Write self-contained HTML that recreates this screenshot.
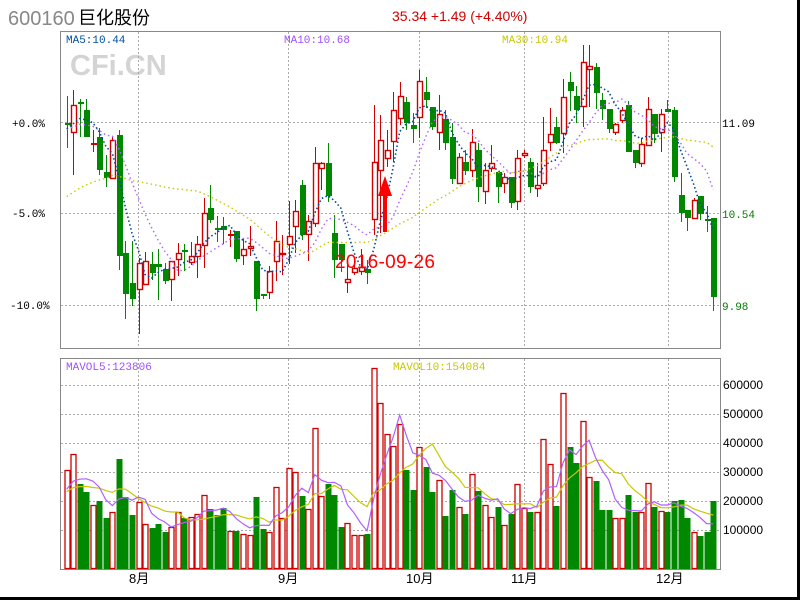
<!DOCTYPE html>
<html><head><meta charset="utf-8"><style>
html,body{margin:0;padding:0;background:#fff;width:800px;height:600px;overflow:hidden}
svg{display:block}
text{font-family:"Liberation Mono","DejaVu Sans Mono",monospace}
</style></head><body>
<svg id="s" width="800" height="600" xmlns="http://www.w3.org/2000/svg">
<rect x="0" y="0" width="800" height="600" fill="#fff"/>
<rect x="0" y="597" width="800" height="3" fill="#000"/>
<rect x="797" y="0" width="3" height="600" fill="#000"/>
<text x="8" y="25" font-family="Liberation Sans,sans-serif" font-size="20" fill="#888" style="font-family:'Liberation Sans',sans-serif">600160</text>
<text x="78" y="24" font-size="18" fill="#000" style="font-family:'Liberation Sans','Noto Sans CJK SC',sans-serif">巨化股份</text>
<text x="392" y="21" font-size="14" fill="#d00000" style="font-family:'Liberation Sans','Noto Sans CJK SC',sans-serif">35.34 +1.49 (+4.40%)</text>
<text x="70" y="75" font-size="29" font-weight="bold" fill="#d4d4d4" style="font-family:'Liberation Sans',sans-serif">CFi.CN</text>
<g id="grid"></g>
<g id="main"></g>
<rect x="60.5" y="31.5" width="660" height="317" fill="none" stroke="#888" stroke-width="1"/>
<rect x="60.5" y="358.5" width="660" height="211" fill="none" stroke="#888" stroke-width="1"/>
<text x="66" y="43" font-size="11" fill="#0050a0">MA5:10.44</text>
<text x="284" y="43" font-size="11" fill="#a050ff">MA10:10.68</text>
<text x="502" y="43" font-size="11" fill="#c8c800">MA30:10.94</text>
<text x="66" y="370" font-size="11" fill="#a050ff">MAVOL5:123806</text>
<text x="393" y="370" font-size="11" fill="#c8c800">MAVOL10:154084</text>
<g font-size="11" fill="#000">
<text x="12" y="127">+0.0%</text><text x="12" y="217">-5.0%</text><text x="10" y="309">-10.0%</text>
<text x="722" y="127">11.09</text><text x="722" y="218" fill="#008000">10.54</text><text x="722" y="310" fill="#008000">9.98</text>
<text x="723" y="389" style="font-family:'Liberation Sans',sans-serif" font-size="12">600000</text>
<text x="723" y="418" style="font-family:'Liberation Sans',sans-serif" font-size="12">500000</text>
<text x="723" y="447" style="font-family:'Liberation Sans',sans-serif" font-size="12">400000</text>
<text x="723" y="476" style="font-family:'Liberation Sans',sans-serif" font-size="12">300000</text>
<text x="723" y="505" style="font-family:'Liberation Sans',sans-serif" font-size="12">200000</text>
<text x="723" y="534" style="font-family:'Liberation Sans',sans-serif" font-size="12">100000</text>
</g>
<g font-size="13" fill="#000" style="font-family:'Liberation Sans','Noto Sans CJK SC',sans-serif">
<text x="129" y="583" style="font-family:'Liberation Sans','Noto Sans CJK SC',sans-serif">8月</text>
<text x="278" y="583" style="font-family:'Liberation Sans','Noto Sans CJK SC',sans-serif">9月</text>
<text x="406" y="583" style="font-family:'Liberation Sans','Noto Sans CJK SC',sans-serif">10月</text>
<text x="511" y="583" style="font-family:'Liberation Sans','Noto Sans CJK SC',sans-serif">11月</text>
<text x="656" y="583" style="font-family:'Liberation Sans','Noto Sans CJK SC',sans-serif">12月</text>
</g>
<text x="335" y="268" font-size="19" fill="#ff0000" style="font-family:'Liberation Sans',sans-serif" textLength="100">2016-09-26</text>
<rect x="383" y="192" width="4" height="40" fill="#ff0000"/>
<polygon points="385,176 378,196 392,196" fill="#ff0000"/>
</svg>
<script>
var C=[[123,124,96,148],[133,105,90,175],[102,104,99,137],[110,137,99,137],[143,143,130,152],[137,170,128,175],[172,178,155,187],[179,140,137,179],[135,256,130,270],[253,294,241,319],[283,299,241,306],[290,263,258,334],[285,261,252,285],[264,273,252,280],[264,267,249,300],[269,281,263,284],[280,261,261,301],[260,253,243,276],[250,250,244,271],[263,256,242,265],[257,244,236,278],[246,213,198,268],[208,220,185,223],[228,230,216,242],[226,230,217,244],[234,234,230,247],[231,259,231,262],[256,249,239,265],[249,246,226,256],[261,299,261,311],[294,296,294,299],[293,271,266,299],[262,241,221,281],[255,253,235,275],[245,236,201,264],[227,211,200,253],[185,235,180,240],[235,221,215,261],[224,163,147,227],[169,163,162,190],[163,196,143,202],[233,260,215,278],[244,260,244,272],[283,279,260,293],[273,268,260,275],[272,267,249,275],[269,273,260,284],[220,162,105,235],[171,140,115,233],[159,150,130,167],[142,110,92,162],[119,96,82,125],
[102,123,97,130],[125,129,113,143],[118,81,70,138],[92,100,77,108],[107,127,107,130],[133,114,95,150],[119,143,110,150],[137,179,123,184],[184,157,153,184],[162,171,150,175],[171,142,129,177],[150,187,143,202],[192,170,163,204],[169,163,145,172],[172,187,172,203],[184,177,173,193],[177,203,177,208],[202,158,150,210],[156,153,150,158],[162,187,158,193],[189,185,163,197],[184,150,117,186],[143,134,108,151],[127,143,117,144],[134,97,79,153],[82,91,72,111],[96,110,86,123],[107,62,45,127],[70,66,45,107],[67,93,63,109],[100,109,93,120],[109,129,109,133],[133,124,123,135],[121,110,107,123],[105,152,101,152],[150,163,150,168],[164,144,138,167],[146,109,97,146],[114,134,114,143],[133,114,109,152],[109,112,100,112],[110,177,107,182],[195,213,173,222],[210,218,210,231],[219,200,198,219],[196,214,196,220],[219,219,206,232],[218,297,218,311]];
var V=[[470,1],[454,1],[484,0],[492,0],[505,1],[501,0],[518,0],[512,1],[459,0],[497,0],[515,0],[502,1],[524,1],[528,0],[524,0],[532,0],[527,1],[512,1],[518,0],[517,1],[514,1],[495,1],[509,0],[515,0],[508,0],[531,1],[531,0],[534,1],[535,1],[497,0],[529,0],[532,1],[487,1],[518,1],[468,1],[472,1],[496,0],[509,1],[428,1],[496,1],[484,0],[495,0],[527,0],[523,1],[535,1],[535,1],[534,0],[368,1],[403,1],[434,1],[446,1],[424,1],[470,0],[490,0],[447,1],[467,0],[492,0],[480,1],[516,0],[490,0],[507,1],[514,0],[474,1],[491,0],[505,1],[517,1],[507,0],[525,1],[514,0],[484,1],[508,1],[512,0],[512,1],[439,1],[464,1],[506,0],[393,1],[447,0],[463,0],[421,1],[477,1],[481,0],[510,0],[510,0],[518,1],[518,1],[495,0],[512,0],[512,1],[483,1],[507,0],[511,1],[512,0],[501,0],[500,0],[518,0],[532,1],[536,0],[532,0],[501,0]];
var NS="http://www.w3.org/2000/svg",h="";
function X(i){return 66.7+i*6.53;}
// grid
var g="";
[122,213,305].forEach(function(y){g+='<line x1="61" y1="'+(y+.5)+'" x2="720" y2="'+(y+.5)+'" stroke="#aaa" stroke-dasharray="2,2"/>';});
[385,414,443,472,501,530].forEach(function(y){g+='<line x1="61" y1="'+(y+.5)+'" x2="720" y2="'+(y+.5)+'" stroke="#aaa" stroke-dasharray="2,2"/>';});
[138,288,419,524,668].forEach(function(x){g+='<line x1="'+(x+.5)+'" y1="32" x2="'+(x+.5)+'" y2="348" stroke="#aaa" stroke-dasharray="2,2"/><line x1="'+(x+.5)+'" y1="359" x2="'+(x+.5)+'" y2="569" stroke="#aaa" stroke-dasharray="2,2"/>';});
document.getElementById("grid").innerHTML=g;
var closes=[];
C.forEach(function(c,i){
 var o=c[0],cl=c[1],hi=c[2],lo=c[3],x=Math.round(X(i));
 var red=cl<o||(cl==o&&i%2==0&&false);
 if(cl<o)red=true; else if(cl>o)red=false; else red=(V[i][1]==1);
 var col=red?"#d00000":"#008800";
 closes.push(cl);
 h+='<line x1="'+(x+.5)+'" y1="'+hi+'" x2="'+(x+.5)+'" y2="'+lo+'" stroke="'+col+'"/>';
 var t=Math.min(o,cl),b=Math.max(o,cl);
 if(b-t<2){h+='<rect x="'+(x-2)+'" y="'+t+'" width="6" height="'+Math.max(2,b-t)+'" fill="'+col+'"/>';}
 else if(red) h+='<rect x="'+(x-1.5)+'" y="'+(t+.5)+'" width="5" height="'+(b-t-1)+'" fill="#fff" stroke="'+col+'" stroke-width="1.4"/>';
 else h+='<rect x="'+(x-2)+'" y="'+t+'" width="6" height="'+(b-t)+'" fill="'+col+'"/>';
});
var pre=[];for(var k=0;k<20;k++)pre.push(230);for(k=0;k<9;k++)pre.push(130);
var all=pre.concat(closes);
function ma(arr,n,off){var r=[];for(var i=0;i<closes.length;i++){var s=0;for(var j=0;j<n;j++)s+=arr[off+i-j];r.push(s/n);}return r;}
function pl(arr,col,dash,w){var p=arr.map(function(v,i){return X(i).toFixed(1)+","+v.toFixed(1)}).join(" ");return '<polyline points="'+p+'" fill="none" stroke="'+col+'" stroke-width="'+w+'"'+(dash?' stroke-dasharray="'+dash+'"':'')+'/>';}
h+=pl(ma(all,30,29),"#c8c800","1.5,3",1.4);
h+=pl(ma(all,10,29),"#b060ff","1.5,3",1.4);
h+=pl(ma(all,5,29),"#004a9a","1.5,2.5",1.6);
// volume
var vv=[];
V.forEach(function(v,i){var x=Math.round(X(i)),t=v[0];vv.push(569-t);
 if(v[1]) h+='<rect x="'+(x-2)+'" y="'+(t+.5)+'" width="5" height="'+(569-t-1)+'" fill="#fff" stroke="#d00000" stroke-width="1.3"/>';
 else h+='<rect x="'+(x-2.5)+'" y="'+t+'" width="6" height="'+(569-t)+'" fill="#008800"/>';
});
var vpre=[];for(k=0;k<9;k++)vpre.push(75);var va=vpre.concat(vv);
function vma(n){var r=[];for(var i=0;i<vv.length;i++){var s=0;for(var j=0;j<n;j++)s+=va[9+i-j];r.push(569-s/n);}return r;}
h+=pl(vma(10),"#c8c800",null,1.2);
h+=pl(vma(5),"#b060ff",null,1.2);
document.getElementById("main").innerHTML=h;
</script>
</body></html>
